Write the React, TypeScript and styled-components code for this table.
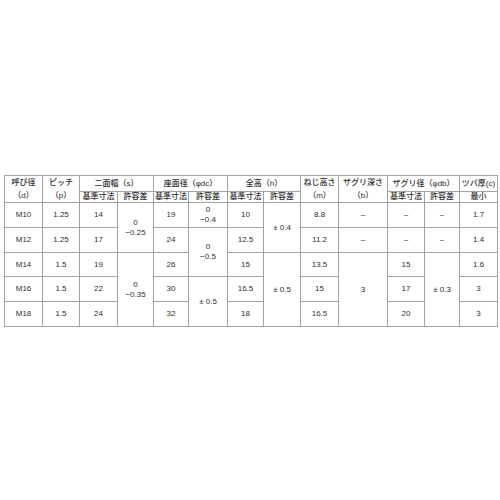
import React from "react";
import styled, { createGlobalStyle } from "styled-components";

const GlobalStyle = createGlobalStyle`
  html, body {
    margin: 0;
    padding: 0;
    background: #fff;
  }
`;

const Page = styled.div`
  width: 500px;
  height: 500px;
  box-sizing: border-box;
  padding: 175px 0 0 4px;
  background: #fff;
`;

const Table = styled.table`
  width: 493px;
  table-layout: fixed;
  border-collapse: collapse;
  font-family: "Liberation Sans", "Noto Sans CJK JP", sans-serif;
  font-size: 8px;
  color: #2e2e2e;

  td, th {
    border: 1px solid #a3a3a3;
    padding: 0;
    text-align: center;
    vertical-align: middle;
    font-weight: normal;
    white-space: nowrap;
    overflow: hidden;
  }
`;

const HeadRow = styled.tr<{ h: number }>`
  height: ${p => p.h}px;
`;

const Head = styled.th`
  line-height: 13px;
  font-weight: 500 !important;
`;

const Sub = styled.th`
  line-height: 10px;
  font-weight: 500 !important;
`;

const Row = styled.tr<{ h: number }>`
  height: ${p => p.h}px;
`;

const Cell = styled.td`
  line-height: 10px;
`;

const widths = [38, 37, 38, 36, 35, 39, 36, 37, 38, 49, 37, 35, 38];

type Tol = { top: string; bottom: string };

function TwoLine({ top, bottom }: Tol) {
  return (
    <>
      {top}
      <br />
      {bottom}
    </>
  );
}

export default function App() {
  return (
    <Page>
      <GlobalStyle />
      <Table>
        <colgroup>
          {widths.map((w, i) => (
            <col key={i} style={{ width: w }} />
          ))}
        </colgroup>
        <thead>
          <HeadRow h={16}>
            <Head rowSpan={2}>呼び径<br />（d）</Head>
            <Head rowSpan={2}>ピッチ<br />（p）</Head>
            <Head colSpan={2}>二面幅（s）</Head>
            <Head colSpan={2}>座面径（φdc）</Head>
            <Head colSpan={2}>全高（h）</Head>
            <Head rowSpan={2}>ねじ高さ<br />（m）</Head>
            <Head rowSpan={2}>ザグリ深さ<br />（b）</Head>
            <Head colSpan={2}>ザグリ径（φdb）</Head>
            <Head>ツバ厚(c)</Head>
          </HeadRow>
          <HeadRow h={11}>
            <Sub>基準寸法</Sub>
            <Sub>許容差</Sub>
            <Sub>基準寸法</Sub>
            <Sub>許容差</Sub>
            <Sub>基準寸法</Sub>
            <Sub>許容差</Sub>
            <Sub>基準寸法</Sub>
            <Sub>許容差</Sub>
            <Sub>最小</Sub>
          </HeadRow>
        </thead>
        <tbody>
          <Row h={25}>
            <Cell>M10</Cell>
            <Cell>1.25</Cell>
            <Cell>14</Cell>
            <Cell rowSpan={2}><TwoLine top="0" bottom="−0.25" /></Cell>
            <Cell>19</Cell>
            <Cell><TwoLine top="0" bottom="−0.4" /></Cell>
            <Cell>10</Cell>
            <Cell rowSpan={2}>± 0.4</Cell>
            <Cell>8.8</Cell>
            <Cell>–</Cell>
            <Cell>–</Cell>
            <Cell>–</Cell>
            <Cell>1.7</Cell>
          </Row>
          <Row h={25}>
            <Cell>M12</Cell>
            <Cell>1.25</Cell>
            <Cell>17</Cell>
            <Cell>24</Cell>
            <Cell rowSpan={2}><TwoLine top="0" bottom="−0.5" /></Cell>
            <Cell>12.5</Cell>
            <Cell>11.2</Cell>
            <Cell>–</Cell>
            <Cell>–</Cell>
            <Cell>–</Cell>
            <Cell>1.4</Cell>
          </Row>
          <Row h={24}>
            <Cell>M14</Cell>
            <Cell>1.5</Cell>
            <Cell>19</Cell>
            <Cell rowSpan={3}><TwoLine top="0" bottom="−0.35" /></Cell>
            <Cell>26</Cell>
            <Cell>15</Cell>
            <Cell rowSpan={3}>± 0.5</Cell>
            <Cell>13.5</Cell>
            <Cell rowSpan={3}>3</Cell>
            <Cell>15</Cell>
            <Cell rowSpan={3}>± 0.3</Cell>
            <Cell>1.6</Cell>
          </Row>
          <Row h={25}>
            <Cell>M16</Cell>
            <Cell>1.5</Cell>
            <Cell>22</Cell>
            <Cell>30</Cell>
            <Cell rowSpan={2}>± 0.5</Cell>
            <Cell>16.5</Cell>
            <Cell>15</Cell>
            <Cell>17</Cell>
            <Cell>3</Cell>
          </Row>
          <Row h={25}>
            <Cell>M18</Cell>
            <Cell>1.5</Cell>
            <Cell>24</Cell>
            <Cell>32</Cell>
            <Cell>18</Cell>
            <Cell>16.5</Cell>
            <Cell>20</Cell>
            <Cell>3</Cell>
          </Row>
        </tbody>
      </Table>
    </Page>
  );
}
